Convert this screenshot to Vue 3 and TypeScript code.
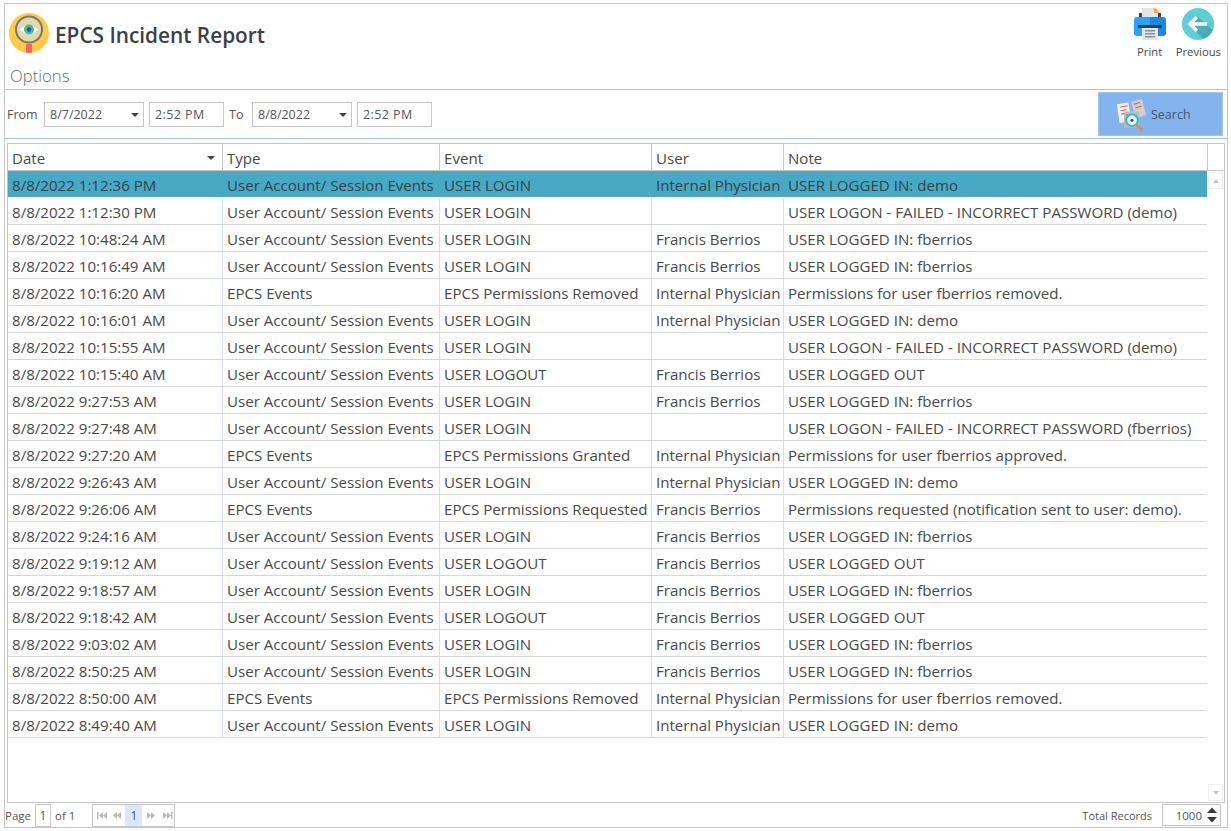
<script setup lang="ts">
const U = 'User Account/ Session Events'
const E = 'EPCS Events'
const IP = 'Internal Physician'
const FB = 'Francis Berrios'
const LOGIN = 'USER LOGIN'
const LOGOUT = 'USER LOGOUT'
const IN_F = 'USER LOGGED IN: fberrios'
const IN_D = 'USER LOGGED IN: demo'
const OUT = 'USER LOGGED OUT'
const rows: string[][] = [
  ['8/8/2022 1:12:36 PM', U, LOGIN, IP, IN_D],
  ['8/8/2022 1:12:30 PM', U, LOGIN, '', 'USER LOGON - FAILED - INCORRECT PASSWORD (demo)'],
  ['8/8/2022 10:48:24 AM', U, LOGIN, FB, IN_F],
  ['8/8/2022 10:16:49 AM', U, LOGIN, FB, IN_F],
  ['8/8/2022 10:16:20 AM', E, 'EPCS Permissions Removed', IP, 'Permissions for user fberrios removed.'],
  ['8/8/2022 10:16:01 AM', U, LOGIN, IP, IN_D],
  ['8/8/2022 10:15:55 AM', U, LOGIN, '', 'USER LOGON - FAILED - INCORRECT PASSWORD (demo)'],
  ['8/8/2022 10:15:40 AM', U, LOGOUT, FB, OUT],
  ['8/8/2022 9:27:53 AM', U, LOGIN, FB, IN_F],
  ['8/8/2022 9:27:48 AM', U, LOGIN, '', 'USER LOGON - FAILED - INCORRECT PASSWORD (fberrios)'],
  ['8/8/2022 9:27:20 AM', E, 'EPCS Permissions Granted', IP, 'Permissions for user fberrios approved.'],
  ['8/8/2022 9:26:43 AM', U, LOGIN, IP, IN_D],
  ['8/8/2022 9:26:06 AM', E, 'EPCS Permissions Requested', FB, 'Permissions requested (notification sent to user: demo).'],
  ['8/8/2022 9:24:16 AM', U, LOGIN, FB, IN_F],
  ['8/8/2022 9:19:12 AM', U, LOGOUT, FB, OUT],
  ['8/8/2022 9:18:57 AM', U, LOGIN, FB, IN_F],
  ['8/8/2022 9:18:42 AM', U, LOGOUT, FB, OUT],
  ['8/8/2022 9:03:02 AM', U, LOGIN, FB, IN_F],
  ['8/8/2022 8:50:25 AM', U, LOGIN, FB, IN_F],
  ['8/8/2022 8:50:00 AM', E, 'EPCS Permissions Removed', IP, 'Permissions for user fberrios removed.'],
  ['8/8/2022 8:49:40 AM', U, LOGIN, IP, IN_D],
]
const headers = ['Date', 'Type', 'Event', 'User', 'Note']
</script>

<template>
  <div class="page">
    <div class="frame">
      <header class="top">
        <div class="title-row">
          <svg class="logo" width="40" height="40" viewBox="0 0 40 40">
            <circle cx="20" cy="20" r="20" fill="#fdcb47" />
            <rect x="17" y="31" width="6" height="9" rx="1" fill="#f8655f" />
            <circle cx="20" cy="16.500" r="13" fill="#e4d9a8" stroke="#77787a" stroke-width="2" />
            <path d="M11 16.500 Q20 7.500 29 16.500 Q20 25.500 11 16.500Z" fill="#fff" />
            <circle cx="20" cy="16.500" r="5" fill="#37bcc0" />
            <circle cx="20" cy="16.500" r="2.200" fill="#44525c" />
          </svg>
          <h1 class="title">EPCS Incident Report</h1>
          <div class="actions">
            <div class="action">
              <svg width="32" height="32" viewBox="0 0 32 32">
                <rect x="5" y="5" width="22" height="10" fill="#3d4350" />
                <path d="M8 0H21L24 3V12H8Z" fill="#e4e4e4" />
                <path d="M20 0H21L26 5H20Z" fill="#f8a13e" />
                <path d="M0 12a3 3 0 0 1 3-3H16V28H3a3 3 0 0 1-3-3Z" fill="#27a4f6" />
                <path d="M16 9H29a3 3 0 0 1 3 3V25a3 3 0 0 1-3 3H16Z" fill="#1989e8" />
                <rect x="4" y="17" width="24" height="3" fill="#38404d" />
                <rect x="8" y="20" width="16" height="12" fill="#e4e4e4" />
                <rect x="11" y="22" width="10" height="1.500" fill="#8c9198" />
                <rect x="11" y="25" width="10" height="1.500" fill="#8c9198" />
                <rect x="11" y="28" width="10" height="1.500" fill="#8c9198" />
              </svg>
              <span>Print</span>
            </div>
            <div class="action">
              <svg width="32" height="32" viewBox="0 0 32 32">
                <circle cx="16" cy="16" r="16" fill="#61cdd4" />
                <path d="M7 16 L15 8 L31 22 A16 16 0 0 1 21 31 Z" fill="#4aaeb5" />
                <path d="M15 9 L8 16 L15 23 M8 16 H25" fill="none" stroke="#fff" stroke-width="3.400" />
              </svg>
              <span>Previous</span>
            </div>
          </div>
        </div>
        <div class="options">Options</div>
      </header>

      <div class="filters">
        <label class="lbl from">From</label>
        <div class="input date">8/7/2022<i class="caret"></i></div>
        <div class="input time">2:52 PM</div>
        <label class="lbl to">To</label>
        <div class="input date">8/8/2022<i class="caret"></i></div>
        <div class="input time">2:52 PM</div>
        <button class="search">
          <svg width="32" height="32" viewBox="0 0 36 36">
            <path d="M1 6 L14 4 L17 25 L4 27Z" fill="#f1f1f1" />
            <path d="M17 3 L29 0 L34 18 L22 22Z" fill="#cfcfcf" />
            <path d="M5 9l8-1.500M5 13l7-1M6 17l5-1M20 6l7-2M22 10l7-2" stroke="#ef4f4f" stroke-width="1.200" />
            <rect x="9" y="14" width="17" height="18" fill="#bcbcbc" />
            <path d="M11 18h9M11 22h5" stroke="#ef4f4f" stroke-width="1.200" />
            <circle cx="18" cy="24" r="6.500" fill="#e8f3f3" stroke="#25c5cc" stroke-width="2.200" />
            <circle cx="18" cy="24" r="1.800" fill="#555" />
            <path d="M23 29 L29 35" stroke="#f6843c" stroke-width="3" />
          </svg>
          <span>Search</span>
        </button>
      </div>

      <section class="grid">
        <div class="row head">
          <div v-for="(h, i) in headers" :key="h" class="cell" :class="'c' + i">
            {{ h }}<i v-if="i === 0" class="caret sort"></i>
          </div>
          <div class="corner"></div>
        </div>
        <div class="body">
          <div class="rows">
            <div v-for="(r, ri) in rows" :key="ri" class="row" :class="{ sel: ri === 0 }">
              <div v-for="(v, i) in r" :key="i" class="cell" :class="'c' + i">{{ v }}</div>
            </div>
          </div>
          <div class="scroll">
            <div class="sbtn"><i class="up"></i></div>
            <div class="sbtn"><i class="down"></i></div>
          </div>
        </div>
      </section>

      <footer class="pager">
        <span>Page</span>
        <span class="pbox">1</span>
        <span>of 1</span>
        <div class="nav">
          <svg width="32" height="21" viewBox="0 0 32 21" class="nav-icons">
            <g fill="#b9b9b9">
              <rect x="4" y="7" width="1.500" height="7" />
              <path d="M10 7v7l-4-3.500ZM14 7v7l-4-3.500Z" />
              <path d="M24 7v7l-4-3.500ZM28 7v7l-4-3.500Z" />
            </g>
          </svg>
          <span class="cur">1</span>
          <svg width="32" height="21" viewBox="0 0 32 21" class="nav-icons">
            <g fill="#b9b9b9">
              <path d="M5 7v7l4-3.500ZM9 7v7l4-3.500Z" />
              <path d="M21 7v7l4-3.500ZM25 7v7l4-3.500Z" />
              <rect x="29" y="7" width="1.500" height="7" />
            </g>
          </svg>
        </div>
        <span class="total">Total Records</span>
        <div class="spin">
          <span>1000</span>
          <svg width="10" height="18" viewBox="0 0 10 18">
            <path d="M5 1.500 L10 7 H0Z M0 11 H10 L5 16.500Z" fill="#3a3a3a" />
          </svg>
        </div>
      </footer>
    </div>
  </div>
</template>

<style>
html, body { margin: 0; background: #fff; }
</style>

<style scoped>
.page {
  width: 1231px;
  height: 831px;
  box-sizing: border-box;
  padding: 3px 3px 3px 4px;
  font-family: "Open Sans", "Noto Sans", sans-serif;
  font-size: 15.100px;
  color: #484848;
  overflow: hidden;
}
.frame {
  height: 100%;
  box-sizing: border-box;
  border: 1px solid #c6c6c6;
  display: flex;
  flex-direction: column;
}
.top { height: 86px; flex: none; border-bottom: 1px solid #a3c4ea; box-sizing: border-box; display: flex; flex-direction: column; }
.title-row { display: flex; align-items: flex-start; height: 60px; padding: 9px 6px 0 4px; box-sizing: border-box; }
.logo { flex: none; }
.title { margin: 7px 0 0 6px; font-size: 20.800px; line-height: 30px; font-weight: 600; color: #3b4048; }
.actions { margin-left: auto; display: flex; gap: 10px; margin-top: -5px; }
.action { display: flex; flex-direction: column; align-items: center; font-size: 11.300px; line-height: 16px; gap: 4px; }
.options { padding-left: 5px; font-size: 16.700px; line-height: 24px; color: #626d79; font-weight: 300; }
.filters {
  flex: none; height: 49px; box-sizing: border-box; display: flex; align-items: center;
  border-bottom: 1px solid #a3c4ea; padding: 0 4px 0 2px; font-size: 12.500px;
}
.lbl { color: #555; padding-top: 1px; }
.from { width: 37px; }
.to { width: 23px; margin-left: 5px; }
.input {
  height: 25px; box-sizing: border-box; border: 1px solid #c6c6c6; display: flex; align-items: center;
  padding: 1px 0 0 5px; color: #555;
}
.date { width: 100px; margin-right: 5px; }
.time { width: 75px; letter-spacing: 0.400px; }
.caret {
  display: block; width: 0; height: 0; border-left: 4px solid transparent; border-right: 4px solid transparent;
  border-top: 4px solid #444; margin-left: auto; margin-right: 4px;
}
.search {
  margin-left: auto; width: 125px; height: 44px; border: 1px solid #a3c4ea; background: #84b4ee;
  display: flex; align-items: center; gap: 3px; padding: 1px 0 0 17px; font: inherit; color: #4b5560;
}
.grid {
  flex: 1; min-height: 0; margin: 4px 2px 0 2px; border: 1px solid #c6c6c6;
  display: flex; flex-direction: column;
}
.row { display: flex; height: 27px; box-sizing: border-box; border-bottom: 1px solid #d6d6d6; }
.head { flex: none; border-bottom: 1px solid #c6c6c6; }
.cell {
  box-sizing: border-box; padding: 2px 0 0 4px; height: 26px; white-space: nowrap; overflow: hidden;
  border-right: 1px solid #d3dfee; flex: none; display: flex; align-items: center;
}
.head .cell { border-right-color: #c6c6c6; }
.c0 { width: 215px; }
.c1 { width: 217px; }
.c2 { width: 212px; }
.c3 { width: 132px; }
.c4 { width: 424px; border-right: none; }
.head .c4 { border-right: 1px solid #c6c6c6; }
.corner { flex: 1; }
.sort { margin-right: 7px; }
.sel { background: #48a9c5; color: #36424a; border-bottom-color: #fff; }
.sel .cell { border-right-color: #48a9c5; }
.body { flex: 1; min-height: 0; display: flex; }
.rows { flex: none; width: 1199px; overflow: hidden; }
.scroll { flex: 1; display: flex; flex-direction: column; justify-content: space-between; padding: 1px; }
.sbtn { height: 15px; border: 1px solid #eee; display: flex; align-items: center; justify-content: center; }
.up, .down { width: 0; height: 0; border-left: 3.500px solid transparent; border-right: 3.500px solid transparent; }
.up { border-bottom: 4px solid #c4c4c4; }
.down { border-top: 4px solid #c4c4c4; }
.pager {
  flex: none; height: 24px; box-sizing: border-box; display: flex; align-items: center; font-size: 11.500px;
  padding: 0 6px 0 0; color: #555;
}
.pbox {
  width: 14px; height: 21px; border: 1px solid #c6c6c6; display: flex; align-items: center; justify-content: center;
  margin: 0 4px 0 4px; font-size: 12px;
}
.nav {
  margin-left: 17px; height: 21px; width: 81px; border: 1px solid #c6c6c6; display: flex; align-items: center; overflow: hidden;
}
.nav-icons { flex: none; }
.cur { width: 17px; height: 21px; background: #dbe8f7; display: flex; align-items: center; justify-content: center; font-size: 12px; flex: none; }
.total { margin-left: auto; margin-right: 10px; font-size: 11px; }
.spin {
  width: 59px; height: 22px; box-sizing: border-box; border: 1px solid #c6c6c6; display: flex; align-items: center;
  justify-content: flex-end; gap: 5px; padding-right: 3px; font-size: 11.500px;
}
</style>
